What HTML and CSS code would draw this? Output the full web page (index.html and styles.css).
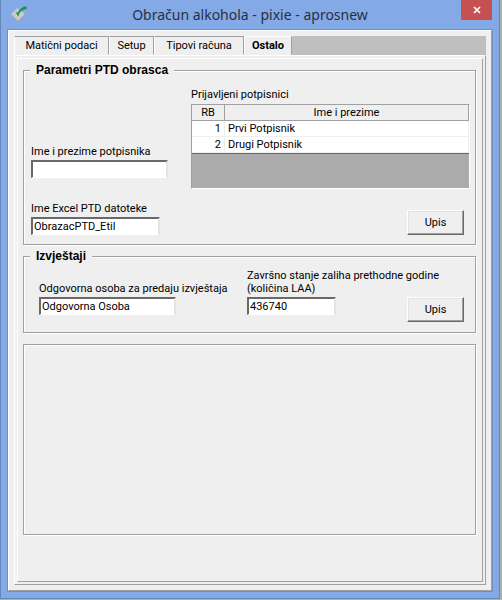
FILE: index.html
```html
<!DOCTYPE html>
<html lang="hr">
<head>
    <meta charset="UTF-8">
    <meta name="viewport" content="width=device-width, initial-scale=1.0">
    <title>Obračun alkohola - pixie - aprosnew</title>
    <link rel="stylesheet" href="styles.css">
</head>
<body>
    <div class="window">
        <header class="titlebar">
            <svg class="app-icon" width="18" height="18" viewBox="0 0 18 18">
                <path d="M1 9.5 L7 3 L15 9 L8 16 Z" fill="#c9cbc8"/>
                <path d="M1 9.5 L8 16 L15 9" fill="none" stroke="#aab0b4" stroke-width="1"/>
                <path d="M5.500 7.500 L8.500 11.500 L9 9 C10.500 6 13 4.500 17 3.800 L16 1.200 C12 2 9.500 4 7.800 7.500 Z" fill="#159447"/>
            </svg>
            <h1>Obračun alkohola - pixie - aprosnew</h1>
            <button class="close" type="button" aria-label="Zatvori">
                <svg width="8" height="8" viewBox="0 0 8 8"><path d="M1 1 L7 7 M7 1 L1 7" stroke="#fff" stroke-width="1.700"/></svg>
            </button>
        </header>

        <main class="client">
            <nav class="tabs">
                <button type="button" class="tab tab-data">Matični podaci</button>
                <button type="button" class="tab tab-setup">Setup</button>
                <button type="button" class="tab tab-types">Tipovi računa</button>
                <button type="button" class="tab tab-other active">Ostalo</button>
            </nav>
            <div class="page">
                <form class="page-inner">
                    <fieldset class="group">
                        <legend>Parametri PTD obrasca</legend>
                        <div class="ptd">
                            <div class="field signer">
                                <label for="signer">Ime i prezime potpisnika</label>
                                <input id="signer" class="name" type="text">
                            </div>
                            <div class="signers">
                                <span id="signers-title">Prijavljeni potpisnici</span>
                                <div class="grid">
                                    <table aria-labelledby="signers-title">
                                        <thead>
                                            <tr><th class="num">RB</th><th>Ime i prezime</th></tr>
                                        </thead>
                                        <tbody>
                                            <tr><td class="num">1</td><td>Prvi Potpisnik</td></tr>
                                            <tr><td class="num">2</td><td>Drugi Potpisnik</td></tr>
                                        </tbody>
                                    </table>
                                </div>
                            </div>
                            <div class="field">
                                <label for="file">Ime Excel PTD datoteke</label>
                                <input id="file" class="file" type="text" value="ObrazacPTD_Etil">
                            </div>
                            <button type="button" class="save">Upis</button>
                        </div>
                    </fieldset>

                    <fieldset class="group">
                        <legend>Izvještaji</legend>
                        <div class="reports">
                            <div class="field person">
                                <label for="person">Odgovorna osoba za predaju izvještaja</label>
                                <input id="person" class="name" type="text" value="Odgovorna Osoba">
                            </div>
                            <div class="field stocks">
                                <label for="stock">Završno stanje zaliha prethodne godine<br>(količina LAA)</label>
                                <input id="stock" class="stock" type="text" value="436740">
                            </div>
                            <button type="button" class="save">Upis</button>
                        </div>
                    </fieldset>

                    <div class="group empty"></div>
                </form>
            </div>
        </main>
    </div>
</body>
</html>
```
FILE: styles.css
```css
* {
    box-sizing: border-box;
}

body {
    margin: 0;
    padding: 0 2px 1px 0;
    min-height: 100vh;
    display: flex;
    background: #a9b4ae;
    font-family: Roboto, "Liberation Sans", sans-serif;
    font-size: 11px;
    line-height: 13px;
    color: #000;
}

button,
input {
    font: inherit;
    color: inherit;
}

.window {
    flex: 1;
    min-width: 0;
    display: flex;
    flex-direction: column;
    padding: 0 7px 7px;
    background: #84a9e7;
    border: 1px solid #6487b8;
    border-top: none;
}

/* title bar */
.titlebar {
    display: flex;
    align-items: flex-start;
    height: 30px;
}

.app-icon {
    margin: 5px 11px 0 2px;
}

h1 {
    flex: 1;
    margin: 4px 0 0;
    text-align: center;
    font: 14px/21px "Noto Sans", "Open Sans", sans-serif;
    color: #2b3040;
}

.close {
    width: 31px;
    height: 20px;
    padding: 0;
    border: none;
    background: #c75050;
}

.client {
    flex: 1;
    display: flex;
    flex-direction: column;
    padding: 5px;
    background: #efefef;
    border: 1px solid;
    border-color: #fff #a0a0a0 #a0a0a0 #fff;
    outline: 1px solid #6f8fc4;
}

/* tabs */
.tabs {
    display: flex;
    height: 19px;
    background: #bfbfbf;
}

.tab {
    padding: 0;
    background: #efefef;
    border: 1px solid;
    border-color: #a0a0a0 #a0a0a0 #efefef #fff;
}

.tab-data {
    width: 95px;
}

.tab-setup {
    width: 45px;
}

.tab-types {
    width: 90px;
}

.tab-other {
    width: 48px;
}

.tab.active {
    border-top-color: #fff;
    font-weight: bold;
}

.page,
.page-inner {
    flex: 1;
    display: flex;
    flex-direction: column;
    border: 1px solid;
    border-color: #fff #a0a0a0 #a0a0a0 #fff;
}

.page {
    padding: 2px;
}

.page-inner {
    padding: 5px 6px 46px 5px;
}

/* group boxes */
.group {
    min-width: 0;
    margin: 0 0 5px;
    padding: 0;
    border: 1px solid #a0a0a0;
    box-shadow: 1px 1px #fff, inset 1px 1px #fff;
}

legend {
    margin-left: 6px;
    padding: 0 6px;
    background: #efefef;
    font: bold 12px/13px "Liberation Sans", sans-serif;
}

.group.empty {
    flex: 1;
    min-height: 100px;
    margin: 6px 0 0;
}

.ptd {
    display: grid;
    grid-template-columns: 160px 1fr;
    row-gap: 13px;
    align-items: end;
    padding: 11px 5px 9px 7px;
}

.ptd .save {
    justify-self: end;
    margin-right: 6px;
}

.reports {
    display: flex;
    align-items: flex-end;
    padding: 6px 11px 10px 15px;
}

.reports .field {
    margin-bottom: 7px;
}

.person {
    flex: none;
    width: 208px;
}

/* the long label may run above the button */
.stocks {
    flex: 1;
    min-width: 0;
}

.field {
    display: flex;
    flex-direction: column;
    align-items: flex-start;
    white-space: nowrap;
}

.signer {
    margin-bottom: 11px;
}

.field label {
    margin-bottom: 2px;
}

input {
    height: 18px;
    padding: 0 1px;
    background: #fff;
    border: 2px solid;
    border-color: #696969 #e3e3e3 #fff #696969;
    border-bottom-width: 1px;
    outline: none;
}

.name {
    width: 137px;
}

.file {
    width: 129px;
}

.stock {
    width: 89px;
}

.save {
    flex: none;
    width: 57px;
    height: 25px;
    padding: 0;
    background: #efefef;
    border: 1px solid;
    border-color: #fff #696969 #696969 #fff;
    box-shadow: inset -1px -1px #a0a0a0, inset 1px 1px #e3e3e3;
}

/* list of signers */
.grid {
    height: 85px;
    margin-top: 3px;
    background: #ababab;
    border: 1px solid;
    border-color: #a0a0a0 #fff #fff #a0a0a0;
}

table {
    width: 100%;
    border-collapse: separate;
    border-spacing: 0;
    border-bottom: 1px solid #696969;
}

th,
td {
    height: 16px;
    padding: 0 3px;
    line-height: 15px;
}

th {
    background: #efefef;
    border-right: 1px solid #a0a0a0;
    border-bottom: 1px solid #a0a0a0;
    font-weight: normal;
}

td {
    background: #fff;
    border-right: 1px solid #efefef;
    border-bottom: 1px solid #efefef;
}

.num {
    width: 33px;
}

td.num {
    text-align: right;
}
```
